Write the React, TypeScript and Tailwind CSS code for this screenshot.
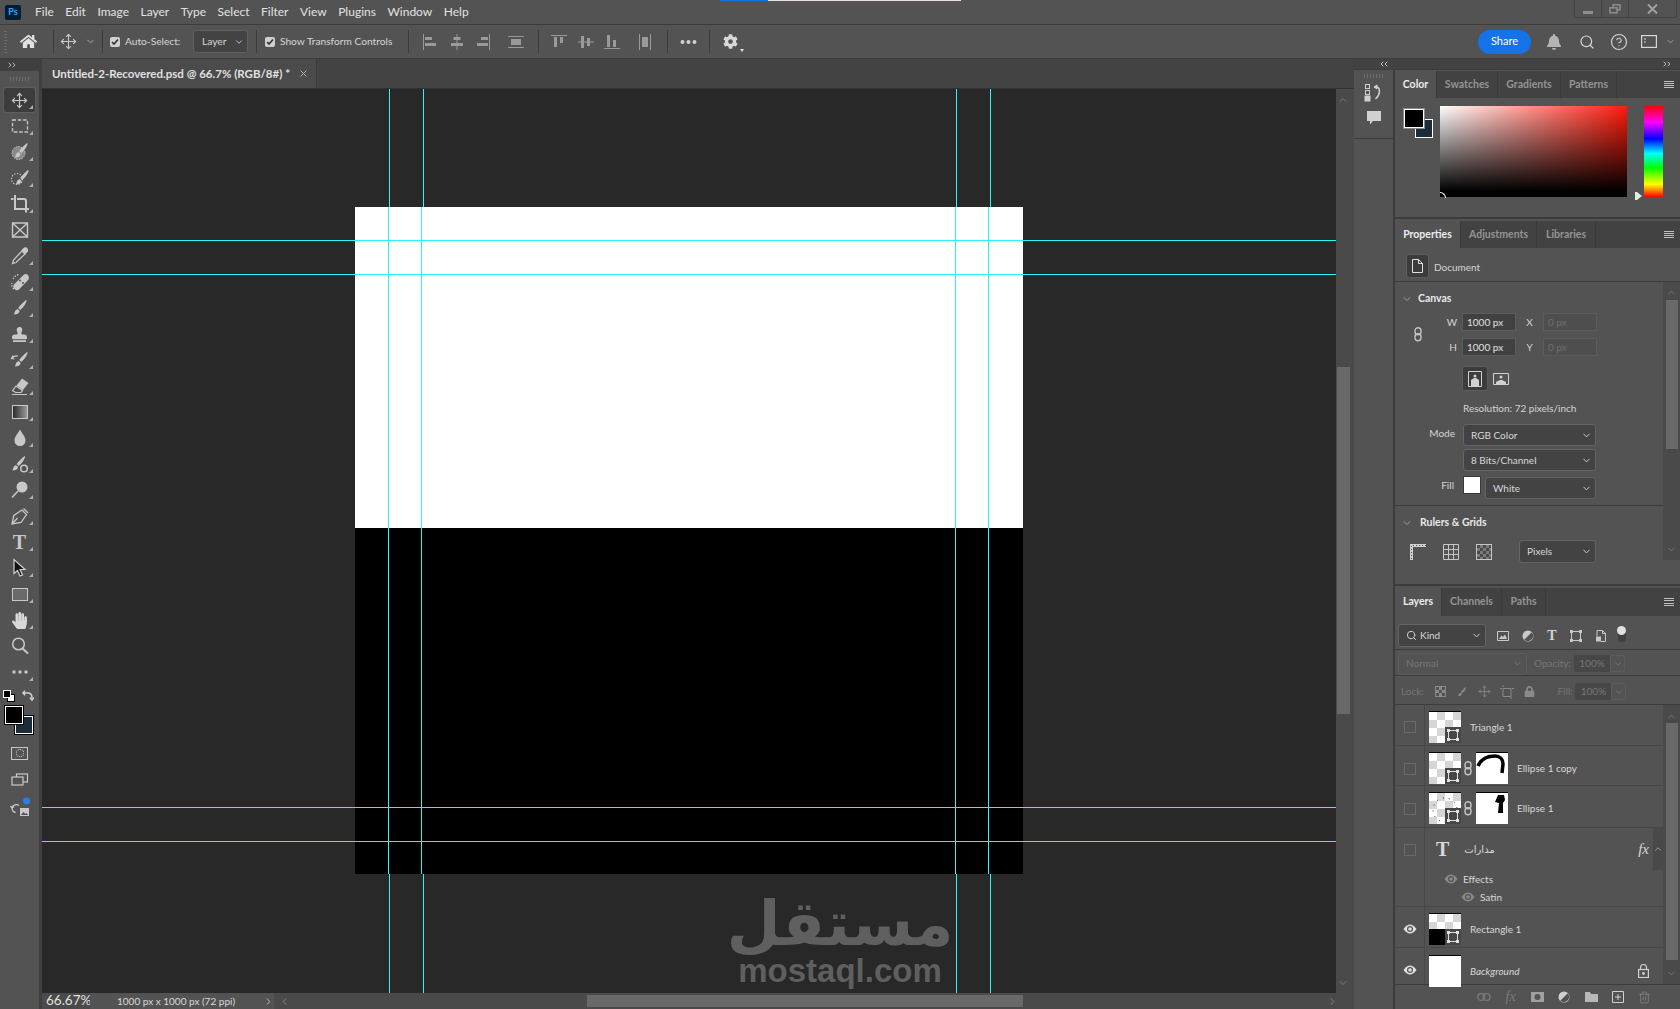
import { ChevronDown, ChevronLeft, ChevronRight, ChevronUp, CircleHelp, Move, Search, Trash2 } from 'lucide-react';
import type { ReactNode } from 'react';
import { FaBell, FaCog, FaHandPaper, FaHome, FaLock, FaStamp } from 'react-icons/fa';

const menuItems = ['File', 'Edit', 'Image', 'Layer', 'Type', 'Select', 'Filter', 'View', 'Plugins', 'Window', 'Help'];

const brushPath = 'M17 3c-3 2.5-6 5.500-7.800 8l2 2c2.600-2 5-5 6.500-9.200zM8.500 12c-2 .5-2.800 2.500-3.500 5.500 3 0 5.200-1 5.700-3.500z';

const Icon = ({ children, size = 22 }: { children: ReactNode; size?: number }) => (
  <svg width={size} height={size} viewBox="0 0 22 22" fill="currentColor">
    {children}
  </svg>
);

const toolIcons: { key: string; active?: boolean; corner?: boolean; node: ReactNode }[] = [
  { key: 'move', active: true, corner: true, node: <Move size={17} strokeWidth={1.6} /> },
  {
    key: 'marquee',
    corner: true,
    node: (
      <Icon>
        <rect x="3.500" y="5" width="15" height="12" fill="none" stroke="currentColor" strokeWidth="1.300" strokeDasharray="3.500 1.800" />
      </Icon>
    ),
  },
  {
    key: 'object',
    corner: true,
    node: (
      <Icon>
        <circle cx="9.500" cy="12" r="6.500" fill="#8a8a8a" stroke="currentColor" strokeWidth="1" strokeDasharray="1.500 1.200" />
        <path d={brushPath} transform="translate(1 -1)" />
      </Icon>
    ),
  },
  {
    key: 'quick',
    corner: true,
    node: (
      <Icon>
        <circle cx="8" cy="12" r="5.500" fill="none" stroke="currentColor" strokeWidth="1.200" strokeDasharray="1.300 1.500" />
        <path d={brushPath} transform="translate(2 0)" />
      </Icon>
    ),
  },
  {
    key: 'crop',
    corner: true,
    node: (
      <Icon>
        <path d="M6 2v14h14M2 6h2.500M17 19.500V8a2 2 0 0 0-2-2H8" fill="none" stroke="currentColor" strokeWidth="2" />
      </Icon>
    ),
  },
  {
    key: 'frame',
    node: (
      <Icon>
        <path d="M3.500 4h15v14h-15zM3.500 4l15 14M18.500 4l-15 14" fill="none" stroke="currentColor" strokeWidth="1.400" />
      </Icon>
    ),
  },
  {
    key: 'dropper',
    corner: true,
    node: (
      <Icon>
        <path d="M13 6 4.500 15l-1 3.500 3.500-1L16 9z" fill="none" stroke="currentColor" strokeWidth="1.300" />
        <path d="m12.500 5 2-2c1-1 3-1 4 .5s.5 3-.5 4l-2 2z" />
      </Icon>
    ),
  },
  {
    key: 'heal',
    corner: true,
    node: (
      <Icon>
        <path d="M4 8c1-2 3-4 6-4.500M5 18c-2-2-3-4-2-6" fill="none" stroke="currentColor" strokeWidth="1.200" strokeDasharray="1.500 1.300" />
        <path d="M15 3.500 5.500 13a3.500 3.500 0 0 0 5 5l9-9.500a3.500 3.500 0 0 0-4.500-5z" />
        <circle cx="11" cy="9.500" r="1" fill="#535353" />
        <circle cx="14" cy="12" r="1" fill="#535353" />
      </Icon>
    ),
  },
  { key: 'brush', corner: true, node: <Icon><path d={brushPath} /></Icon> },
  { key: 'stamp', corner: true, node: <FaStamp size={15} /> },
  {
    key: 'history',
    corner: true,
    node: (
      <Icon>
        <path d={brushPath} transform="translate(1 0)" />
        <path d="M3 9c2-2 4-2.500 6-2M4 6.500 2.500 9.500l3 .5" fill="none" stroke="currentColor" strokeWidth="1.200" />
      </Icon>
    ),
  },
  {
    key: 'eraser',
    corner: true,
    node: (
      <Icon>
        <path d="m13 3.500 6.500 4.500-5.500 7-6.500-4.500z" />
        <path d="m7 11 6.500 4.500-1.500 2H6.500L3.500 15.500zM3 19.500h15" fill="none" stroke="currentColor" strokeWidth="1.200" />
      </Icon>
    ),
  },
  {
    key: 'gradient',
    corner: true,
    node: <div className="h-[14px] w-[16px] border border-[#c8c8c8] bg-[linear-gradient(to_right,#2c2c2c,#9a9a9a)]" />,
  },
  {
    key: 'drop',
    corner: true,
    node: (
      <Icon>
        <path d="M11 2.500c-2 4-5.500 7-5.500 11a5.500 5.500 0 0 0 11 0c0-4-3.500-7-5.500-11z" />
      </Icon>
    ),
  },
  {
    key: 'smudge',
    corner: true,
    node: (
      <Icon>
        <path d={brushPath} transform="translate(-1.500 0)" />
        <circle cx="15" cy="15.500" r="3.300" fill="none" stroke="currentColor" strokeWidth="1.500" />
      </Icon>
    ),
  },
  {
    key: 'dodge',
    corner: true,
    node: (
      <Icon>
        <circle cx="13" cy="8" r="5.500" />
        <path d="m9 12-6 6.500" fill="none" stroke="currentColor" strokeWidth="1.600" />
      </Icon>
    ),
  },
  {
    key: 'pen',
    corner: true,
    node: (
      <Icon>
        <path d="m3 19 1.800-8.500L13 5l4.500 4.500L12 17.500zM3 19l5.500-6M14.500 3.500l4.500 4.500" fill="none" stroke="currentColor" strokeWidth="1.300" />
      </Icon>
    ),
  },
  {
    key: 'type',
    corner: true,
    node: <span className="font-['Liberation_Serif',serif] text-[20px] font-bold leading-none">T</span>,
  },
  {
    key: 'arrow',
    corner: true,
    node: (
      <Icon>
        <path d="M5 2.500v14l3.500-3 2.500 5.500 2.500-1-2.500-5.500H16z" fill="#111" stroke="#d0d0d0" strokeWidth="1.200" />
      </Icon>
    ),
  },
  {
    key: 'shape',
    corner: true,
    node: <div className="h-[13px] w-[16px] border border-[#c8c8c8] bg-[#6a6a6a]" />,
  },
  { key: 'hand', corner: true, node: <FaHandPaper size={17} className="text-[#d8d8d8]" /> },
  {
    key: 'zoom',
    node: (
      <Icon>
        <circle cx="9.500" cy="9" r="5.800" fill="none" stroke="currentColor" strokeWidth="1.500" />
        <path d="m13.500 13.500 5.500 5" fill="none" stroke="currentColor" strokeWidth="2" />
      </Icon>
    ),
  },
  {
    key: 'more',
    corner: true,
    node: (
      <Icon>
        <circle cx="5" cy="11" r="1.700" />
        <circle cx="11" cy="11" r="1.700" />
        <circle cx="17" cy="11" r="1.700" />
      </Icon>
    ),
  },
];

const Tool = ({ active, corner, children }: { active?: boolean; corner?: boolean; children: ReactNode }) => (
  <div className="relative flex h-[26px] w-[39px] items-center justify-center text-[#c8c8c8]">
    {active && <div className="absolute inset-x-[3px] inset-y-0 rounded-[3px] border border-[#5e5e5e] bg-[#3c3c3c]" />}
    <div className="relative flex items-center justify-center">{children}</div>
    {corner && (
      <svg className="absolute bottom-[4px] right-[6px]" width="4" height="4" viewBox="0 0 4 4" fill="#b0b0b0">
        <path d="M4 0v4H0z" />
      </svg>
    )}
  </div>
);

const Grip = ({ className }: { className: string }) => (
  <div className={`bg-[repeating-linear-gradient(to_right,#6e6e6e_0_1px,transparent_1px_3px)] ${className}`} />
);

const Toolbox = () => (
  <aside className="flex w-[39px] shrink-0 flex-col bg-[#535353]">
    <div className="flex h-[12px] items-center bg-[#3f3f3f] pl-[6px] text-[#d0d0d0]">
      <ChevronRight size={8} strokeWidth={2.500} />
      <ChevronRight size={8} strokeWidth={2.500} className="-ml-[4px]" />
    </div>
    <div className="flex h-[16px] items-center justify-center">
      <Grip className="h-[4px] w-[20px]" />
    </div>
    {toolIcons.map((tool) => (
      <Tool key={tool.key} active={tool.active} corner={tool.corner}>
        {tool.node}
      </Tool>
    ))}
    <div className="mt-[4px] flex h-[14px] items-center justify-between pl-[3px] pr-[5px]">
      <div className="relative h-[12px] w-[12px]">
        <div className="absolute bottom-0 right-0 h-[8px] w-[8px] border border-black bg-white" />
        <div className="absolute left-0 top-0 h-[8px] w-[8px] border border-white bg-black" />
      </div>
      <svg width="12" height="12" viewBox="0 0 12 12" fill="none" stroke="#d0d0d0" strokeWidth="1.500">
        <path d="M1 3h5c2.500 0 4 1.500 4 5M3 .8 1 3l2 2.200M7.800 7.500l2.200 2.500 2-2.500" />
      </svg>
    </div>
    <div className="relative mt-[3px] h-[28px] w-[39px]">
      <div className="absolute left-[15px] top-[10px] h-[18px] w-[18px] border border-white bg-[#1d2c3a] outline outline-black" />
      <div className="absolute left-[5px] top-0 h-[18px] w-[18px] border border-white bg-black outline outline-black" />
    </div>
    <div className="mt-[11px] flex h-[16px] items-center justify-center">
      <div className="flex h-[13px] w-[17px] items-center justify-center border border-[#c8c8c8]">
        <div className="h-[8px] w-[8px] rounded-full border border-dotted border-[#d8d8d8]" />
      </div>
    </div>
    <div className="mt-[11px] flex h-[16px] items-center justify-center">
      <svg width="18" height="14" viewBox="0 0 18 14" fill="#535353" stroke="#c8c8c8" strokeWidth="1.200">
        <rect x="5.500" y="1" width="11" height="8" />
        <rect x="1" y="4" width="11" height="8" />
      </svg>
    </div>
    <div className="mt-[8px] flex h-[22px] items-center justify-center">
      <svg width="22" height="22" viewBox="0 0 22 22" fill="none">
        <path d="M10 9.500A4.500 4.500 0 0 0 3 12c0 2.500 1.500 4 3.500 4.500M1.500 10l1.500 2 2-1.500" stroke="#c8c8c8" strokeWidth="1.300" />
        <rect x="11" y="12" width="9" height="8" fill="#c8c8c8" />
        <path d="m12 19 2.500-3 2 2 1-1 1.500 2z" fill="#535353" />
        <circle cx="17.500" cy="5" r="3.500" fill="#2680eb" />
      </svg>
    </div>
  </aside>
);

const Checkbox = () => (
  <div className="flex h-[10px] w-[10px] items-center justify-center rounded-[2px] bg-[#d0d0d0]">
    <svg width="8" height="8" viewBox="0 0 8 8" fill="none" stroke="#333" strokeWidth="1.600">
      <path d="m1 4 2 2 4-4.500" />
    </svg>
  </div>
);

const Sep = () => <div className="h-[23px] w-px shrink-0 bg-[#3c3c3c]" />;

const AlignIcon = ({ d, className }: { d: string; className: string }) => (
  <svg className={className} width="18" height="18" viewBox="0 0 18 18" fill="#9a9a9a">
    <path d={d} />
  </svg>
);

const OptionsBar = () => (
  <div className="flex h-[34px] shrink-0 items-center whitespace-nowrap border-b border-[#3c3c3c] bg-[#535353] text-[10.200px] text-[#d6d6d6]">
    <div className="ml-[4px] h-[22px] w-[3px] bg-[repeating-linear-gradient(to_bottom,#6a6a6a_0_1px,transparent_1px_3px)]" />
    <div className="flex w-[43px] items-center justify-center text-[#e0e0e0]">
      <FaHome size={17} />
    </div>
    <div className="w-[3px]" />
    <Sep />
    <div className="flex w-[28px] items-center justify-center text-[#c8c8c8]">
      <Move size={17} strokeWidth={1.500} />
    </div>
    <div className="flex w-[16px] items-center justify-center text-[#b0b0b0]">
      <ChevronDown size={11} />
    </div>
    <div className="w-[4px]" />
    <Sep />
    <div className="ml-[7px]">
      <Checkbox />
    </div>
    <span className="ml-[5px] w-[55px]">Auto-Select:</span>
    <div className="ml-[13px] flex h-[23px] w-[55px] items-center justify-between rounded-[3px] border border-[#5f5f5f] bg-[#434343] pl-[8px] pr-[3px]">
      <span>Layer</span>
      <ChevronDown size={10} />
    </div>
    <div className="ml-[8px]">
      <Sep />
    </div>
    <div className="ml-[8px]">
      <Checkbox />
    </div>
    <span className="ml-[5px] w-[113px]">Show Transform Controls</span>
    <div className="ml-[15px]">
      <Sep />
    </div>
    <AlignIcon className="ml-[13px]" d="M1 1h1v16H1zM3 4h7v3H3zM3 10h11v3H3z" />
    <AlignIcon className="ml-[8px]" d="M8.500 1h1v16h-1zM5.500 4h7v3h-7zM3 10h12v3H3z" />
    <AlignIcon className="ml-[7px]" d="M16 1h1v16h-1zM8 4h7v3H8zM4 10h11v3H4z" />
    <AlignIcon className="ml-[16px]" d="M1 3h16v1H1zM1 14h16v1H1zM4 6h10v6H4z" />
    <div className="ml-[13px]">
      <Sep />
    </div>
    <AlignIcon className="ml-[11px]" d="M1 2h16v1H1zM4 4h3v10H4zM10 4h3v6h-3z" />
    <AlignIcon className="ml-[9px]" d="M1 8.500h16v1H1zM4 3h3v12H4zM10 5h3v8h-3z" />
    <AlignIcon className="ml-[8px]" d="M1 15h16v1H1zM4 2h3v12H4zM10 7h3v7h-3z" />
    <AlignIcon className="ml-[15px]" d="M3 1h1v16H3zM14 1h1v16h-1zM6 4h6v10H6z" />
    <div className="ml-[13px]">
      <Sep />
    </div>
    <svg className="ml-[12px]" width="17" height="6" viewBox="0 0 17 6" fill="#d0d0d0">
      <circle cx="2.500" cy="3" r="2" />
      <circle cx="8.500" cy="3" r="2" />
      <circle cx="14.500" cy="3" r="2" />
    </svg>
    <div className="ml-[12px]">
      <Sep />
    </div>
    <div className="relative ml-[13px] text-[#d8d8d8]">
      <FaCog size={15} />
      <svg className="absolute -bottom-[3px] -right-[6px]" width="4" height="3" viewBox="0 0 4 3" fill="#e0e0e0">
        <path d="M0 0h4L2 3z" />
      </svg>
    </div>
    <div className="ml-auto flex h-[24px] w-[53px] items-center justify-center rounded-full bg-[#1473e6] text-[11px] text-white">
      Share
    </div>
    <div className="ml-[7px] flex w-[32px] justify-center text-[#b4b4b4]">
      <FaBell size={16} />
    </div>
    <div className="flex w-[33px] justify-center text-[#d8d8d8]">
      <Search size={16} strokeWidth={1.800} />
    </div>
    <div className="flex w-[32px] justify-center text-[#d8d8d8]">
      <CircleHelp size={18} strokeWidth={1.500} />
    </div>
    <div className="flex w-[28px] justify-center">
      <svg width="16" height="13" viewBox="0 0 16 13" fill="none" stroke="#d8d8d8" strokeWidth="1.200">
        <rect x=".6" y=".6" width="14.800" height="11.800" />
        <path d="M3 4h2M3 7h2" />
      </svg>
    </div>
    <div className="flex w-[14px] justify-center text-[#a0a0a0]">
      <ChevronDown size={11} />
    </div>
    <div className="w-[3px]" />
  </div>
);

const MenuBar = () => (
  <div className="relative flex h-[25px] shrink-0 items-center border-b border-[#3c3c3c] bg-[#535353] text-[12px] text-[#e2e2e2]">
    <div className="ml-[5px] flex h-[15px] w-[16px] items-center justify-center rounded-[2px] bg-[#001e36] text-[9px] font-bold text-[#31a8ff]">
      Ps
    </div>
    <nav className="ml-[14px] flex items-center gap-[11.500px]">
      {menuItems.map((item) => (
        <span key={item}>{item}</span>
      ))}
    </nav>
    <div className="absolute left-[720px] top-0 flex h-px w-[241px]">
      <div className="w-[48px] bg-[#1473e6]" />
      <div className="flex-1 bg-[#e8e0dc]" />
    </div>
    <div className="ml-auto mr-[3px] flex h-[18px] self-start rounded-b-[3px] border border-t-0 border-[#444444] text-[#8e8e8e]">
      <div className="flex w-[27px] items-end justify-center border-r border-[#444444] pb-[3px]">
        <div className="h-[3px] w-[10px] bg-[#8e8e8e]" />
      </div>
      <div className="flex w-[27px] items-center justify-center border-r border-[#444444]">
        <svg width="12" height="10" viewBox="0 0 12 10" fill="none" stroke="#8e8e8e" strokeWidth="1.500">
          <rect x="4" y=".8" width="7" height="5" />
          <rect x="1" y="3.800" width="7" height="5" fill="#535353" />
        </svg>
      </div>
      <div className="flex w-[47px] items-center justify-center">
        <svg width="11" height="10" viewBox="0 0 11 10" fill="none" stroke="#a0a0a0" strokeWidth="2">
          <path d="m1 .5 9 9M10 .5l-9 9" />
        </svg>
      </div>
    </div>
  </div>
);

const verticalGuides = ['left-[347px]', 'left-[381px]', 'left-[914px]', 'left-[948px]'];
const horizontalGuides = ['top-[151px]', 'top-[185px]', 'top-[718px]', 'top-[752px]'];
const docVerticalGuides = ['left-[33px]', 'left-[66px]', 'left-[600px]', 'left-[633px]'];
const docHorizontalGuides = ['top-[33px]', 'top-[67px]', 'top-[600px]', 'top-[634px]'];

const CanvasArea = () => (
  <div className="relative min-w-0 flex-1 overflow-hidden bg-[#282828]">
    {verticalGuides.map((pos) => (
      <div key={pos} className={`absolute inset-y-0 w-px bg-[#2ef5f5] ${pos}`} />
    ))}
    {horizontalGuides.map((pos) => (
      <div key={pos} className={`absolute inset-x-0 h-px bg-[#2ef5f5] ${pos}`} />
    ))}
    <div className="relative ml-[313px] mt-[118px] flex h-[667px] w-[668px] flex-col">
      <div className="h-[321px] bg-white" />
      <div className="flex-1 bg-black" />
      {docVerticalGuides.map((pos) => (
        <div key={pos} className={`absolute inset-y-0 w-px bg-[#2ef5f5] ${pos}`} />
      ))}
      {docHorizontalGuides.map((pos) => (
        <div key={pos} className={`absolute inset-x-0 h-px bg-[#2ef5f5] ${pos}`} />
      ))}
    </div>
    <div className="absolute left-[697px] top-[804px] flex w-[202px] flex-col items-center whitespace-nowrap text-[#5f5f5f]">
      <span dir="rtl" className="font-['DejaVu_Sans',sans-serif] text-[62px] font-bold leading-[62px]">
        مستقل
      </span>
      <span className="font-['Liberation_Sans',sans-serif] text-[33px] font-bold leading-[32px]">mostaql.com</span>
    </div>
  </div>
);

const DocumentArea = () => (
  <div className="flex min-w-0 flex-1 flex-col">
    <div className="flex h-[29px] shrink-0 bg-[#434343]">
      <div className="flex w-[275px] items-center whitespace-nowrap border-r border-[#3a3a3a] bg-[#4b4b4b] pl-[10px] text-[11.500px] font-bold text-[#e0e0e0]">
        <span className="w-[243px]">Untitled-2-Recovered.psd @ 66.7% (RGB/8#) *</span>
        <svg className="ml-[5px]" width="7" height="7" viewBox="0 0 7 7" stroke="#b0b0b0" strokeWidth="1">
          <path d="m.5.5 6 6M6.500.5l-6 6" />
        </svg>
      </div>
    </div>
    <div className="flex min-h-0 flex-1 border-t border-[#333333]">
      <CanvasArea />
      <div className="flex w-[18px] shrink-0 flex-col items-center bg-[#4a4a4a] pr-[4px] pt-[5px] text-[#7a7a7a]">
        <ChevronUp size={12} />
        <div className="mt-[261px] h-[347px] w-[13px] bg-[#696969]" />
        <div className="mt-auto pb-[4px]">
          <ChevronDown size={12} />
        </div>
      </div>
    </div>
    <div className="flex h-[16px] shrink-0 items-center bg-[#4a4a4a]">
      <span className="w-[48px] pl-[4px] text-[13.500px] leading-none text-[#e0e0e0]">66.67%</span>
      <div className="flex h-full w-[184px] items-center whitespace-nowrap bg-[#535353] pl-[27px] text-[10px] text-[#d8d8d8]">
        <span className="w-[147px]">1000 px x 1000 px (72 ppi)</span>
        <ChevronRight size={11} className="text-[#c0c0c0]" />
      </div>
      <ChevronLeft size={11} className="ml-[5px] text-[#8a8a8a]" />
      <div className="ml-[297px] h-[12px] w-[436px] bg-[#696969]" />
      <ChevronRight size={11} className="ml-[304px] text-[#8a8a8a]" />
    </div>
  </div>
);

const Dock = () => (
  <div className="flex w-[41px] shrink-0 flex-col border-r-2 border-[#3c3c3c] bg-[#3f3f3f]">
    <div className="flex h-[69px] flex-col items-center border-b border-[#3c3c3c] bg-[#535353]">
      <Grip className="mt-[4px] h-[4px] w-[20px]" />
      <svg className="mt-[6px]" width="20" height="18" viewBox="0 0 20 18" fill="none" stroke="#d0d0d0">
        <rect x="1.500" y=".5" width="4" height="4" />
        <rect x="1.500" y="6.500" width="4" height="4" />
        <rect x="1" y="12" width="5" height="5" fill="#d0d0d0" />
        <path d="M10 3h3c3 1 4 7-1.500 12" strokeWidth="1.500" />
        <path d="M13 1v4l-3-2z" fill="#d0d0d0" />
      </svg>
      <svg className="mt-[9px]" width="14" height="14" viewBox="0 0 14 14" fill="#d0d0d0">
        <path d="M0 0h14v10H6l-3 3.500V10H0z" />
      </svg>
    </div>
    <div className="flex-1 bg-[#535353]" />
  </div>
);

const PanelMenu = () => (
  <div className="ml-auto mr-[6px] flex h-[8px] w-[10px] flex-col justify-between">
    <div className="h-px bg-[#c0c0c0]" />
    <div className="h-px bg-[#c0c0c0]" />
    <div className="h-px bg-[#c0c0c0]" />
    <div className="h-px bg-[#c0c0c0]" />
  </div>
);

const PanelTabs = ({ tabs, className }: { tabs: { label: string; width: string }[]; className: string }) => (
  <div className={`flex items-center bg-[#424242] text-[10.500px] font-bold ${className}`}>
    {tabs.map((tab, i) => (
      <div
        key={tab.label}
        className={`flex h-full items-center justify-center border-r border-[#3a3a3a] ${tab.width} ${i === 0 ? 'bg-[#535353] text-[#ececec]' : 'text-[#949494]'}`}
      >
        {tab.label}
      </div>
    ))}
    <PanelMenu />
  </div>
);

const ColorPanel = () => (
  <section className="flex h-[149px] shrink-0 flex-col border-b-2 border-[#3c3c3c] pt-px">
    <PanelTabs
      className="h-[27px]"
      tabs={[
        { label: 'Color', width: 'w-[42px]' },
        { label: 'Swatches', width: 'w-[61px]' },
        { label: 'Gradients', width: 'w-[63px]' },
        { label: 'Patterns', width: 'w-[56px]' },
      ]}
    />
    <div className="flex pt-[8px]">
      <div className="relative ml-[8px] mt-[2px] h-[30px] w-[30px]">
        <div className="absolute left-[12px] top-[11px] h-[19px] w-[18px] border border-white bg-[#1d2c3a]" />
        <div className="absolute left-px top-px h-[19px] w-[20px] border border-white bg-black outline outline-[#8a8a8a]" />
      </div>
      <div className="relative ml-[7px] h-[91px] w-[187px] bg-[linear-gradient(to_top,#000,#000_6%,transparent),linear-gradient(to_right,#fff,#ff1a0a)]">
        <div className="absolute -bottom-[1px] left-0 h-[6px] w-[6px] rounded-tr-full border-r border-t border-white" />
      </div>
      <div className="relative ml-[17px] h-[91px] w-[19px] bg-[linear-gradient(to_bottom,#f00,#f0f_18%,#00f_36%,#0ff_52%,#0f0_68%,#ff0_86%,#f00)]">
        <svg className="absolute -bottom-[3px] -left-[9px]" width="7" height="8" viewBox="0 0 7 8" fill="#e8e8e8">
          <path d="M0 0h2l5 4-5 4H0z" />
        </svg>
      </div>
    </div>
  </section>
);

const Sel = ({ label, className, muted }: { label: string; className: string; muted?: boolean }) => (
  <div
    className={`flex items-center justify-between rounded-[3px] border pl-[7px] pr-[3px] ${muted ? 'border-[#5c5c5c] text-[#767676]' : 'border-[#646464] bg-[#434343] text-[#d8d8d8]'} ${className}`}
  >
    <span>{label}</span>
    <ChevronDown size={11} />
  </div>
);

const Field = ({ value, disabled }: { value: string; disabled?: boolean }) => (
  <div
    className={`flex h-[18px] w-[54px] items-center border pl-[4px] ${disabled ? 'border-[#5c5c5c] bg-[#4e4e4e] text-[#6e6e6e]' : 'border-[#5c5c5c] bg-[#414141] text-[#e0e0e0]'}`}
  >
    {value}
  </div>
);

const LinkIcon = () => (
  <svg width="8" height="15" viewBox="0 0 8 15" fill="none" stroke="#c4c4c4" strokeWidth="1.400">
    <rect x="1" y=".8" width="6" height="7" rx="3" />
    <rect x="1" y="6.800" width="6" height="7" rx="3" />
  </svg>
);

const SectionHead = ({ title, className }: { title: string; className: string }) => (
  <div className={`flex items-center pl-[6px] pt-[3px] ${className}`}>
    <ChevronDown size={12} className="text-[#a0a0a0]" />
    <span className="ml-[5px] text-[10.500px] font-bold text-[#e8e8e8]">{title}</span>
  </div>
);

const PropertiesPanel = () => (
  <section className="flex h-[367px] shrink-0 flex-col border-b-2 border-[#3c3c3c] pt-[2px] text-[10px] text-[#d4d4d4]">
    <PanelTabs
      className="h-[27px] shrink-0"
      tabs={[
        { label: 'Properties', width: 'w-[66px]' },
        { label: 'Adjustments', width: 'w-[76px]' },
        { label: 'Libraries', width: 'w-[59px]' },
      ]}
    />
    <div className="flex h-[34px] shrink-0 items-start border-b border-[#3c3c3c] pl-[11px] pt-[6px]">
      <div className="flex h-[24px] w-[23px] items-center justify-center rounded-[3px] border border-[#5c5c5c] bg-[#3c3c3c]">
        <svg width="11" height="14" viewBox="0 0 11 14" fill="none" stroke="#e0e0e0">
          <path d="M.5.5h6l4 4v9H.5zM6.500.5v4h4" />
        </svg>
      </div>
      <span className="ml-[5px] leading-[26px]">Document</span>
    </div>
    <div className="flex min-h-0 flex-1">
      <div className="w-[268px] shrink-0">
        <SectionHead title="Canvas" className="h-[31px]" />
        <div className="flex">
          <div className="flex w-[46px] items-center justify-center">
            <LinkIcon />
          </div>
          <div className="flex flex-col gap-[7px]">
            <div className="flex items-center">
              <span className="w-[16px] text-right">W</span>
              <div className="ml-[5px]">
                <Field value="1000 px" />
              </div>
              <span className="w-[27px] text-center">X</span>
              <Field value="0 px" disabled />
            </div>
            <div className="flex items-center">
              <span className="w-[16px] text-right">H</span>
              <div className="ml-[5px]">
                <Field value="1000 px" />
              </div>
              <span className="w-[27px] text-center">Y</span>
              <Field value="0 px" disabled />
            </div>
          </div>
        </div>
        <div className="ml-[67px] mt-[10px] flex items-center">
          <div className="flex h-[25px] w-[26px] items-center justify-center rounded-[3px] border border-[#5c5c5c] bg-[#3c3c3c]">
            <svg width="14" height="16" viewBox="0 0 14 16" fill="#d0d0d0">
              <path d="M.5.5h13v15H.5z" fill="none" stroke="#d0d0d0" />
              <circle cx="7" cy="5" r="1.500" />
              <path d="M3 15v-6l3-2h2l3 2v6z" />
            </svg>
          </div>
          <svg className="ml-[5px]" width="16" height="12" viewBox="0 0 16 12" fill="#d0d0d0">
            <path d="M.5.5h15v11H.5z" fill="none" stroke="#d0d0d0" />
            <circle cx="8" cy="4" r="1.500" />
            <path d="M3 11V9l4-2h2l4 2v2z" />
          </svg>
        </div>
        <div className="ml-[68px] mt-[10px] h-[14px] leading-[14px]">Resolution: 72 pixels/inch</div>
        <div className="mt-[9px] flex items-start">
          <span className="w-[60px] text-right leading-[18px]">Mode</span>
          <Sel label="RGB Color" className="ml-[8px] h-[22px] w-[133px]" />
        </div>
        <div className="ml-[68px] mt-[3px]">
          <Sel label="8 Bits/Channel" className="h-[22px] w-[133px]" />
        </div>
        <div className="mt-[5px] flex items-start">
          <span className="w-[59px] text-right leading-[18px]">Fill</span>
          <div className="ml-[9px] h-[18px] w-[18px] border border-[#3a3a3a] bg-white" />
          <Sel label="White" className="ml-[4px] mt-px h-[22px] w-[111px]" />
        </div>
        <div className="mt-[6px] h-px bg-[#3c3c3c]" />
        <SectionHead title="Rulers & Grids" className="h-[30px] [&>span]:ml-[7px]" />
        <div className="mt-[4px] flex items-center pl-[15px]">
          <svg width="16" height="16" viewBox="0 0 16 16" fill="none">
            <path d="M16 1.500H1.500V16" stroke="#d0d0d0" strokeWidth="3" />
            <path d="M16 1.500H1.500V16" stroke="#535353" strokeWidth="1" strokeDasharray="1 2" />
          </svg>
          <svg className="ml-[17px]" width="16" height="16" viewBox="0 0 16 16" fill="none" stroke="#c8c8c8">
            <path d="M.5.5h15v15H.5zM5.500.5v15M10.500.5v15M.5 5.500h15M.5 10.500h15" />
          </svg>
          <div className="ml-[17px] h-[16px] w-[16px] border border-[#c8c8c8] bg-[conic-gradient(#7c7c7c_25%,#4a4a4a_0_50%,#7c7c7c_0_75%,#4a4a4a_0)] bg-[length:6px_6px]" />
          <Sel label="Pixels" className="ml-[27px] h-[23px] w-[77px]" />
        </div>
      </div>
      <div className="flex h-[278px] w-[17px] flex-col items-center bg-[#4a4a4a] pt-[5px] text-[#7a7a7a]">
        <ChevronUp size={11} />
        <div className="mt-[2px] h-[149px] w-[12px] bg-[#696969]" />
        <div className="mt-auto pb-[5px]">
          <ChevronDown size={11} />
        </div>
      </div>
    </div>
  </section>
);

const filterIcons = [
  <svg key="image" width="12" height="10" viewBox="0 0 12 10" fill="#c8c8c8">
    <path d="M.5.5h11v9H.5z" fill="none" stroke="#c8c8c8" />
    <path d="m2 8 2.500-3.500L6 6l2-2.500L10 8z" />
  </svg>,
  <svg key="adj" width="12" height="12" viewBox="0 0 12 12" fill="#c8c8c8">
    <circle cx="6" cy="6" r="5.500" />
    <path d="M9.800 2.200a5.400 5.400 0 0 1-7.600 7.600z" fill="#535353" />
  </svg>,
  <span key="t" className="font-['Liberation_Serif',serif] text-[14px] font-bold leading-none text-[#d4d4d4]">
    T
  </span>,
  <svg key="shape" width="12" height="12" viewBox="0 0 12 12" fill="#c8c8c8">
    <path d="M1.500 1.500h9v9h-9z" fill="none" stroke="#c8c8c8" />
    <path d="M0 0h3v3H0zM9 0h3v3H9zM0 9h3v3H0zM9 9h3v3H9z" />
  </svg>,
  <svg key="smart" width="10" height="12" viewBox="0 0 10 12" fill="none" stroke="#c8c8c8">
    <path d="M1 6V.5h5.500l3 3v8H5M6.500.5v3h3" />
    <rect x="0" y="6.500" width="5" height="5" fill="#c8c8c8" stroke="none" />
  </svg>,
];

const lockIcons = [
  <div key="px" className="h-[11px] w-[11px] border border-[#8a8a8a] bg-[conic-gradient(#8a8a8a_25%,#535353_0_50%,#8a8a8a_0_75%,#535353_0)] bg-[length:6px_6px]" />,
  <svg key="brush" width="14" height="14" viewBox="0 0 22 22" fill="#8a8a8a">
    <path d={brushPath} />
  </svg>,
  <Move key="move" size={13} strokeWidth={1.500} className="text-[#8a8a8a]" />,
  <svg key="art" width="14" height="14" viewBox="0 0 14 14" fill="none" stroke="#8a8a8a">
    <path d="M3 3.500h8v8H3zM0 3.500h2M12 3.500h2M3 0v2M11 12v2" />
  </svg>,
  <FaLock key="lock" size={11} className="text-[#8a8a8a]" />,
];

const checker = 'bg-[conic-gradient(#d6d6d6_25%,#fff_0_50%,#d6d6d6_0_75%,#fff_0)] bg-[length:16px_16px]';

const ShapeBadge = () => (
  <div className="absolute bottom-0 right-0 flex h-[16px] w-[16px] items-center justify-center bg-[#474747]">
    <svg width="12" height="12" viewBox="0 0 12 12" fill="#e0e0e0">
      <path d="M1.500 1.500h9v9h-9z" fill="none" stroke="#e0e0e0" />
      <path d="M0 0h3v3H0zM9 0h3v3H9zM0 9h3v3H0zM9 9h3v3H9z" />
    </svg>
  </div>
);

const Thumb = ({ children, className }: { children?: ReactNode; className: string }) => (
  <div className={`relative h-[32px] w-[32px] shrink-0 overflow-hidden border-t border-black ${className}`}>{children}</div>
);

const Eye = ({ muted }: { muted?: boolean }) => (
  <svg width="14" height="10" viewBox="0 0 14 10">
    <path d="M.5 5C3 1.500 5 .5 7 .5S11 1.500 13.500 5C11 8.500 9 9.500 7 9.500S3 8.500.5 5z" fill={muted ? '#8a8a8a' : '#e0e0e0'} />
    <circle cx="7" cy="5" r="3" fill="#535353" />
    <circle cx="7" cy="5" r="1.800" fill={muted ? '#8a8a8a' : '#e0e0e0'} />
  </svg>
);

const VisCell = ({ on, className }: { on?: boolean; className: string }) => (
  <div className={`flex w-[30px] shrink-0 justify-center border-r border-[#474747] ${className}`}>
    {on ? <Eye /> : <div className="h-[12px] w-[12px] border border-[#6a6a6a]" />}
  </div>
);

const LayersPanel = () => (
  <section className="flex min-h-0 flex-1 flex-col pt-[2px] text-[10px] text-[#d8d8d8]">
    <PanelTabs
      className="h-[28px] shrink-0"
      tabs={[
        { label: 'Layers', width: 'w-[47px]' },
        { label: 'Channels', width: 'w-[60px]' },
        { label: 'Paths', width: 'w-[44px]' },
      ]}
    />
    <div className="flex h-[34px] shrink-0 items-start border-b border-[#3c3c3c] pl-[3px] pt-[8px]">
      <div className="flex h-[23px] w-[88px] items-center justify-between rounded-[3px] border border-[#646464] bg-[#434343] pl-[7px] pr-[3px]">
        <span className="flex items-center gap-[3px]">
          <Search size={11} strokeWidth={2} />
          Kind
        </span>
        <ChevronDown size={11} />
      </div>
      <div className="ml-[5px] flex h-[23px] items-center">
        {filterIcons.map((icon, i) => (
          <div key={i} className="flex w-[24.400px] justify-center">
            {icon}
          </div>
        ))}
        <div className="relative ml-[5px] mt-[2px] h-[16px] w-[8px] self-start rounded-full bg-[#3f3f3f]">
          <div className="absolute -left-px top-0 h-[9px] w-[9px] rounded-full bg-[#e0e0e0]" />
        </div>
      </div>
    </div>
    <div className="flex h-[26px] shrink-0 items-center border-b border-[#3c3c3c] pl-[3px] pt-[2px] text-[#767676]">
      <Sel label="Normal" muted className="h-[22px] w-[129px]" />
      <span className="ml-[7px] w-[40px]">Opacity:</span>
      <div className="flex h-[17px] w-[36px] items-center justify-center rounded-l-[2px] bg-[#474747]">100%</div>
      <div className="flex h-[17px] w-[15px] items-center justify-center rounded-r-[2px] border border-[#5c5c5c]">
        <ChevronDown size={10} />
      </div>
    </div>
    <div className="flex h-[29px] shrink-0 items-center border-b border-[#3c3c3c] pl-[6px] pt-[3px] text-[#767676]">
      <span className="w-[28px]">Lock:</span>
      {lockIcons.map((icon) => (
        <div key={icon.key} className="flex w-[22.300px] justify-center">
          {icon}
        </div>
      ))}
      <span className="ml-[17px] w-[18px]">Fill:</span>
      <div className="flex h-[17px] w-[36px] items-center justify-center rounded-l-[2px] bg-[#474747]">100%</div>
      <div className="flex h-[17px] w-[15px] items-center justify-center rounded-r-[2px] border border-[#5c5c5c]">
        <ChevronDown size={10} />
      </div>
    </div>
    <div className="flex min-h-0 flex-1">
      <div className="w-[268px] shrink-0">
        <div className="flex h-[41px] border-b border-[#474747]">
          <VisCell className="pt-[16px]" />
          <div className="mt-[6px] flex h-[32px] items-center pl-[4px]">
            <Thumb className={checker}>
              <ShapeBadge />
            </Thumb>
            <span className="ml-[9px]">Triangle 1</span>
          </div>
        </div>
        <div className="flex h-[40px] border-b border-[#474747]">
          <VisCell className="pt-[17px]" />
          <div className="mt-[6px] flex h-[32px] items-center pl-[4px]">
            <Thumb className={checker}>
              <ShapeBadge />
            </Thumb>
            <div className="ml-[3px]">
              <LinkIcon />
            </div>
            <Thumb className="ml-[4px] bg-white">
              <svg width="32" height="32" viewBox="0 0 32 32" fill="none" stroke="#000" strokeWidth="3.500">
                <path d="M2 13C6 4 13 3 19 3c5 0 8 3 8 8l-1 9" />
              </svg>
            </Thumb>
            <span className="ml-[9px]">Ellipse 1 copy</span>
          </div>
        </div>
        <div className="flex h-[42px] border-b border-[#474747]">
          <VisCell className="pt-[17px]" />
          <div className="mt-[6px] flex h-[32px] items-center pl-[4px]">
            <Thumb className={checker}>
              <svg className="absolute inset-0" width="32" height="32" viewBox="0 0 32 32" fill="none" stroke="#222" strokeDasharray="1 5">
                <circle cx="16" cy="17" r="12" />
              </svg>
              <ShapeBadge />
            </Thumb>
            <div className="ml-[3px]">
              <LinkIcon />
            </div>
            <Thumb className="ml-[4px] bg-white">
              <svg width="32" height="32" viewBox="0 0 32 32" fill="#000">
                <path d="M22 2h6l1 5-2 3v10h-5l1-10-4-1z" />
              </svg>
            </Thumb>
            <span className="ml-[9px]">Ellipse 1</span>
          </div>
        </div>
        <div className="flex h-[79px] border-b border-[#474747]">
          <VisCell className="pt-[16px]" />
          <div className="relative flex-1">
            <div className="flex h-[42px] items-center pl-[11px]">
              <span className="font-['Liberation_Serif',serif] text-[20px] font-bold leading-none text-[#d8d8d8]">T</span>
              <span dir="rtl" className="ml-[15px] font-['DejaVu_Sans',sans-serif] text-[10px]">
                مدارات
              </span>
              <span className="ml-auto font-['Liberation_Serif',serif] text-[15px] italic text-[#d8d8d8]">fx</span>
              <div className="ml-[4px] flex h-full w-[10px] items-center justify-center bg-[#494949] text-[#a8a8a8]">
                <ChevronUp size={10} />
              </div>
            </div>
            <div className="flex h-[18px] items-center pl-[19px]">
              <Eye muted />
              <span className="ml-[5px]">Effects</span>
            </div>
            <div className="flex h-[18px] items-center pl-[36px]">
              <Eye muted />
              <span className="ml-[5px]">Satin</span>
            </div>
          </div>
        </div>
        <div className="flex h-[41px] border-b border-[#474747]">
          <VisCell on className="pt-[17px]" />
          <div className="mt-[6px] flex h-[32px] items-center pl-[4px]">
            <Thumb className={checker}>
              <div className="absolute inset-x-0 bottom-0 h-[16px] bg-black" />
              <ShapeBadge />
            </Thumb>
            <span className="ml-[9px]">Rectangle 1</span>
          </div>
        </div>
        <div className="flex h-[35px]">
          <VisCell on className="pt-[17px]" />
          <div className="mt-[7px] flex h-[32px] flex-1 items-center pl-[4px]">
            <Thumb className="bg-white" />
            <span className="ml-[9px] italic">Background</span>
            <svg className="ml-auto mr-[14px]" width="11" height="14" viewBox="0 0 11 14" fill="none" stroke="#d0d0d0" strokeWidth="1.200">
              <rect x=".6" y="5.500" width="9.800" height="8" />
              <path d="M2.500 5.500V3.500a3 3 0 0 1 6 0v2" />
              <circle cx="5.500" cy="9.500" r=".8" fill="#d0d0d0" />
            </svg>
          </div>
        </div>
      </div>
      <div className="flex w-[17px] flex-col items-center bg-[#4a4a4a] pt-[6px] text-[#7a7a7a]">
        <ChevronUp size={11} />
        <div className="mt-px h-[237px] w-[12px] bg-[#696969]" />
        <div className="mt-auto pb-[5px]">
          <ChevronDown size={11} />
        </div>
      </div>
    </div>
    <div className="flex h-[25px] shrink-0 items-center justify-end border-t border-[#3c3c3c] pr-[22px] text-[#c8c8c8] [&>div]:flex [&>div]:w-[26.800px] [&>div]:justify-center">
      <div>
        <svg width="14" height="8" viewBox="0 0 14 8" fill="none" stroke="#7a7a7a" strokeWidth="1.300">
          <rect x=".7" y=".7" width="7" height="6.600" rx="3.300" />
          <rect x="6" y=".7" width="7" height="6.600" rx="3.300" />
        </svg>
      </div>
      <div>
        <span className="font-['Liberation_Serif',serif] text-[14px] italic leading-none text-[#7a7a7a]">fx</span>
      </div>
      <div>
        <svg width="13" height="10" viewBox="0 0 13 10">
          <rect width="13" height="10" fill="#a0a0a0" />
          <circle cx="6.500" cy="5" r="3" fill="#535353" />
        </svg>
      </div>
      <div>
        <svg width="12" height="12" viewBox="0 0 12 12" fill="#d0d0d0">
          <circle cx="6" cy="6" r="5.500" />
          <path d="M9.800 2.200a5.400 5.400 0 0 1-7.600 7.600z" fill="#535353" />
        </svg>
      </div>
      <div>
        <svg width="13" height="10" viewBox="0 0 13 10" fill="#b8b8b8">
          <path d="M0 0h5l1 2h7v8H0z" />
        </svg>
      </div>
      <div>
        <svg width="12" height="12" viewBox="0 0 12 12" fill="none" stroke="#d0d0d0">
          <path d="M.5.5h11v11H.5zM6 3v6M3 6h6" />
        </svg>
      </div>
      <div>
        <Trash2 size={13} strokeWidth={1.300} className="text-[#8a8a8a]" />
      </div>
    </div>
  </section>
);

const RightColumn = () => (
  <div className="flex w-[326px] shrink-0 flex-col">
    <div className="flex h-[11px] shrink-0 items-center justify-between border-b border-[#3c3c3c] bg-[#424242] pl-[24px] pr-[7px] text-[#d8d8d8]">
      <div className="flex">
        <ChevronLeft size={8} strokeWidth={2.500} />
        <ChevronLeft size={8} strokeWidth={2.500} className="-ml-[4px]" />
      </div>
      <div className="flex">
        <ChevronRight size={8} strokeWidth={2.500} />
        <ChevronRight size={8} strokeWidth={2.500} className="-ml-[4px]" />
      </div>
    </div>
    <div className="flex min-h-0 flex-1">
      <Dock />
      <div className="flex min-w-0 flex-1 flex-col bg-[#535353]">
        <ColorPanel />
        <PropertiesPanel />
        <LayersPanel />
      </div>
    </div>
  </div>
);

export default function App() {
  return (
    <div className="flex h-[1009px] w-[1680px] flex-col overflow-hidden bg-[#3c3c3c] font-[Lato,sans-serif]">
      <MenuBar />
      <OptionsBar />
      <div className="flex min-h-0 flex-1">
        <Toolbox />
        <div className="w-[3px] shrink-0 bg-[#3f3f3f]" />
        <DocumentArea />
        <RightColumn />
      </div>
    </div>
  );
}
